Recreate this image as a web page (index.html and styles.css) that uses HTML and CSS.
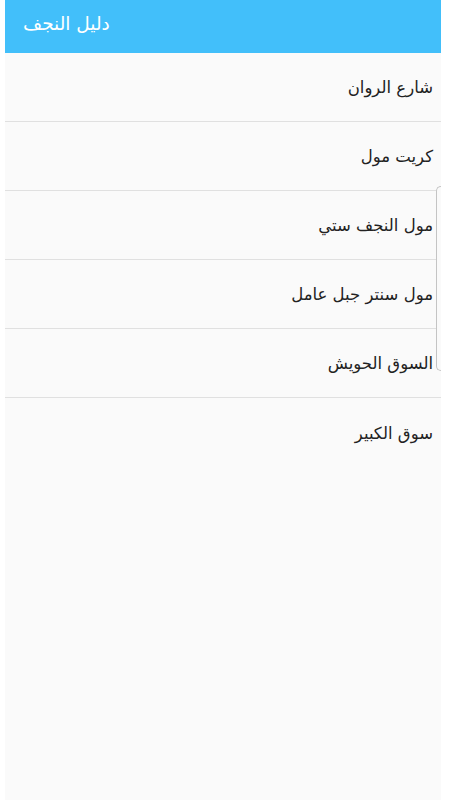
FILE: index.html
```html
<!DOCTYPE html>
<html lang="ar">
<head>
  <meta charset="UTF-8">
  <title>دليل النجف</title>
  <link rel="stylesheet" href="styles.css">
</head>
<body>
  <div class="screen">
    <!-- App bar -->
    <div class="app-bar">
      <span class="app-title">دليل النجف</span>
    </div>

    <!-- Places -->
    <ul class="place-list" dir="rtl">
      <li>شارع الروان</li>
      <li>كريت مول</li>
      <li>مول النجف ستي</li>
      <li>مول سنتر جبل عامل</li>
      <li>السوق الحويش</li>
      <li class="last">سوق الكبير</li>
    </ul>

    <div class="scroll-thumb"></div>
  </div>
</body>
</html>
```

FILE: styles.css
```css
body {
  margin: 0;
  background-color: #ffffff;
  font-family: "DejaVu Sans", "Noto Sans", sans-serif;
}

.screen {
  position: relative;
  width: 436px;
  height: 800px;
  margin-left: 5px;
  background-color: #fafafa;
}

.app-bar {
  height: 53px;
  background-color: #42bffa;
  display: flex;
  align-items: center;
  padding-left: 18px;
  padding-bottom: 6px;
  box-sizing: border-box;
}

.app-title {
  color: #ffffff;
  font-size: 18.5px;
}

.place-list {
  list-style-type: none;
  margin: 0;
  padding: 0;
}

.place-list li {
  height: 69px;
  display: flex;
  align-items: center;
  padding-right: 8px;
  padding-top: 1px;
  box-sizing: border-box;
  font-size: 16.5px;
  color: #222222;
  border-bottom: 1px solid #e0e0e0;
}

.place-list li.last {
  border-bottom: none;
}

.scroll-thumb {
  position: absolute;
  right: 0;
  top: 186px;
  width: 4px;
  height: 183px;
  border: 1px solid #c4c4c4;
  border-right: none;
  border-radius: 5px 0 0 5px;
  background-color: #fafafa;
}
```
